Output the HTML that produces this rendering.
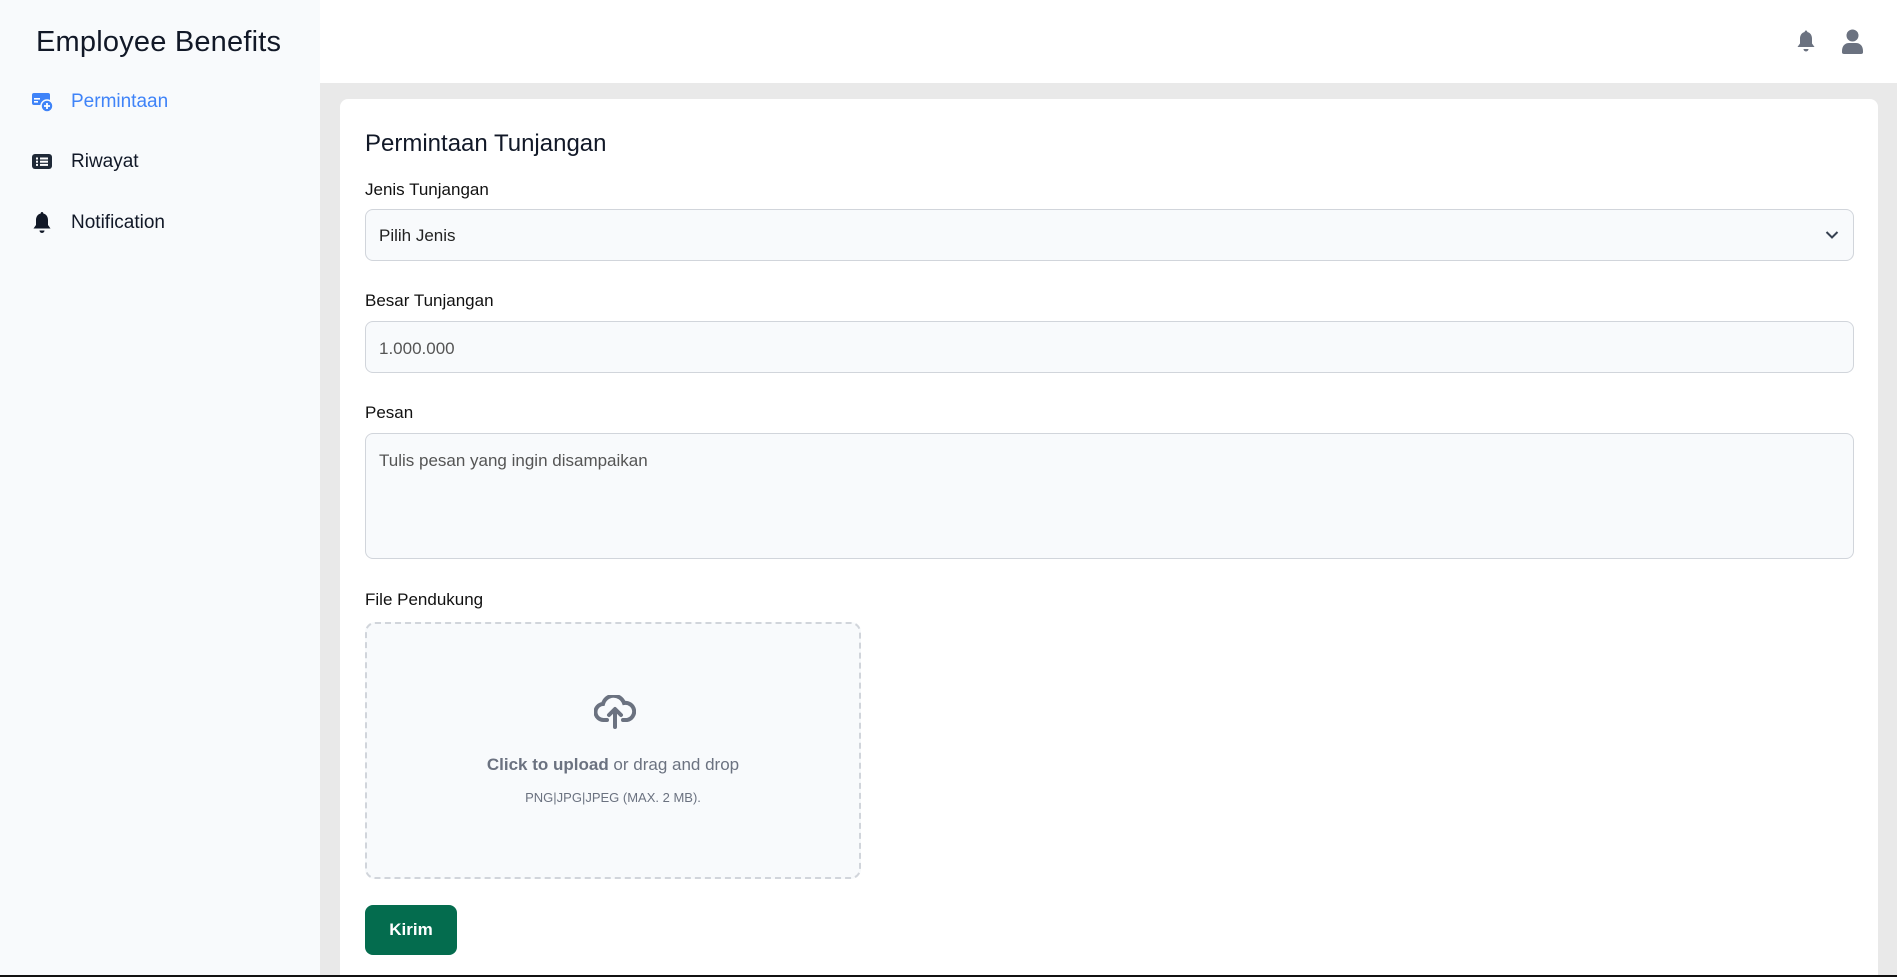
<!DOCTYPE html>
<html><head><meta charset="utf-8"><style>
*{box-sizing:border-box;margin:0;padding:0}
html{width:1897px;height:977px;overflow:hidden}
body{width:1897px;height:977px;overflow:hidden;font-family:"Liberation Sans",sans-serif;background:#e9e9e9;position:relative;color:#111827}
.side{position:absolute;left:0;top:0;width:320px;height:977px;background:#f8fafc}
.side h1{position:absolute;left:36px;top:26px;font-size:29px;font-weight:400;color:#111827;letter-spacing:0.2px}
.nav{position:absolute;left:32px;display:flex;align-items:center;font-size:19px}
.nav svg{margin-right:17px}
.hdr{position:absolute;left:320px;top:0;right:0;height:83px;background:#fff}
.card{position:absolute;left:340px;top:99px;width:1538px;height:878px;background:#fff;border-radius:8px 8px 0 0}
.t{position:absolute;left:25px;font-size:24px}
.l{position:absolute;left:25px;font-size:17px;color:#111}
.f{position:absolute;left:25px;width:1489px;background:#f8fafc;border:1px solid #d1d5db;border-radius:8px;font-size:17px;color:#555;padding-left:13px}
.up{position:absolute;left:25px;top:523px;width:496px;height:257px;border:2px dashed #d1d5db;border-radius:10px;background:#f8fafc;text-align:center;color:#6b7280}
.btn{position:absolute;left:25px;top:806px;width:92px;height:50px;background:#046c4e;border-radius:8px;color:#fff;font-weight:700;font-size:17px;text-align:center;line-height:50px}
.bl{position:absolute;left:0;top:975px;width:1897px;height:2px;background:#111}
</style></head><body>
<div class="side">
<h1>Employee Benefits</h1>
<div class="nav" style="top:91px;color:#3f83f8"><svg width="22" height="22" viewBox="0 0 22 22"><rect x="0" y="2" width="18" height="12" rx="2" fill="#3f83f8"/><rect x="2" y="7" width="6" height="1.6" fill="#fff"/><rect x="2" y="10" width="4" height="1.6" fill="#fff"/><circle cx="15" cy="15" r="6" fill="#3f83f8" stroke="#f8fafc" stroke-width="1.5"/><path d="M15 12v6M12 15h6" stroke="#fff" stroke-width="1.8"/></svg>Permintaan</div>
<div class="nav" style="top:151px"><svg width="22" height="22" viewBox="0 0 22 22"><rect x="0" y="3" width="20" height="15" rx="3" fill="#1f2937"/><g fill="#fff"><rect x="4" y="6.5" width="2" height="2"/><rect x="4" y="9.7" width="2" height="2"/><rect x="4" y="12.9" width="2" height="2"/><rect x="8" y="6.5" width="8" height="2"/><rect x="8" y="9.7" width="8" height="2"/><rect x="8" y="12.9" width="8" height="2"/></g></svg>Riwayat</div>
<div class="nav" style="top:211px"><svg width="22" height="24" viewBox="0 0 22 24"><path d="M10 1c1 0 1.3.7 1.3 1.5C14.5 3.3 16 6 16 9v5l2.5 3.5H1.5L4 14V9c0-3 1.5-5.7 4.7-6.5C8.7 1.7 9 1 10 1z" fill="#111827"/><path d="M7.5 19.5h5a2.5 2.5 0 0 1-5 0z" fill="#111827"/></svg>Notification</div>
</div>
<div class="hdr">
<svg style="position:absolute;left:1476px;top:28px" width="22" height="27" viewBox="0 0 22 24"><path d="M10 1c1 0 1.3.7 1.3 1.5C14.5 3.3 16 6 16 9v5l2.5 3.5H1.5L4 14V9c0-3 1.5-5.7 4.7-6.5C8.7 1.7 9 1 10 1z" fill="#6b7280"/><path d="M7.5 19.5h5a2.5 2.5 0 0 1-5 0z" fill="#6b7280"/></svg>
<svg style="position:absolute;left:1522px;top:29px" width="21" height="25" viewBox="0 0 21 25"><circle cx="10.5" cy="6.5" r="6" fill="#6b7280"/><path d="M0 22c0-5 3-8 7-8h7c4 0 7 3 7 8v1.5c0 1-1 1.5-2 1.5H2c-1 0-2-.5-2-1.5z" fill="#6b7280"/></svg>
</div>
<div class="card">
<div class="t" style="top:31px">Permintaan Tunjangan</div>
<div class="l" style="top:81px">Jenis Tunjangan</div>
<div class="f" style="top:110px;height:52px;line-height:52px;color:#222">Pilih Jenis<svg style="position:absolute;right:14px;top:20px" width="14" height="10" viewBox="0 0 14 10"><path d="M1.5 2l5.5 5.5L12.5 2" stroke="#374151" stroke-width="2" fill="none"/></svg></div>
<div class="l" style="top:192px">Besar Tunjangan</div>
<div class="f" style="top:222px;height:52px;line-height:54px">1.000.000</div>
<div class="l" style="top:304px">Pesan</div>
<div class="f" style="top:334px;height:126px;padding-top:17px">Tulis pesan yang ingin disampaikan</div>
<div class="l" style="top:491px">File Pendukung</div>
<div class="up">
<svg style="position:absolute;left:227px;top:71px" width="42" height="34" viewBox="0 0 42 34"><path d="M13 25H10a8 8 0 0 1-1-16 11 11 0 0 1 21-1 8.5 8.5 0 0 1 3 17h-4" stroke="#6b7280" stroke-width="4" fill="none" stroke-linecap="round"/><path d="M21 32V15M15 20l6-6 6 6" stroke="#6b7280" stroke-width="4" fill="none" stroke-linecap="round" stroke-linejoin="round"/></svg>
<div style="position:absolute;top:131px;width:100%;font-size:17px"><b>Click to upload</b> or drag and drop</div>
<div style="position:absolute;top:166px;width:100%;font-size:13px">PNG|JPG|JPEG (MAX. 2 MB).</div>
</div>
<div class="btn">Kirim</div>
</div>
<div class="bl"></div>
</body></html>
